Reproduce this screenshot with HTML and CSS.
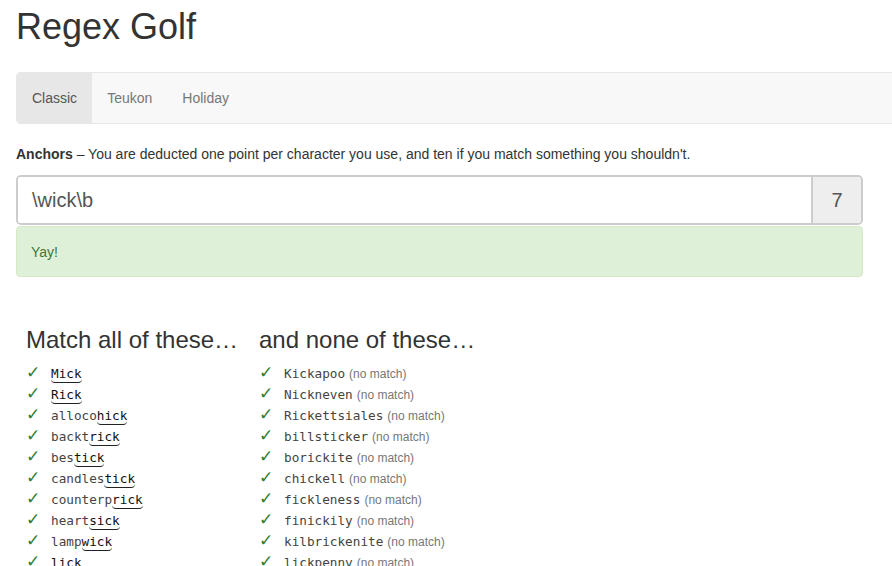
FILE: index.html
```html
<!DOCTYPE html>
<html>
<head>
<meta charset="utf-8">
<title>Regex Golf</title>
<link rel="stylesheet" href="styles.css">
</head>
<body>
<div class="page">
  <h1 class="title">Regex Golf</h1>
  <nav class="navbar">
    <a class="nav-item active">Classic</a>
    <a class="nav-item">Teukon</a>
    <a class="nav-item">Holiday</a>
  </nav>
  <div class="main">
    <p class="desc"><b>Anchors</b> – You are deducted one point per character you use, and ten if you match something you shouldn't.</p>
    <div class="input-group">
      <div class="regex-input">\wick\b</div>
      <div class="addon">7</div>
    </div>
    <div class="alert">Yay!</div>
    <div class="columns">
      <div class="col col-match">
        <h3 class="col-title">Match all of these…</h3>
        <ul class="words">
          <li><span class="check">✓</span><code><span class="hit">Mick</span></code></li>
          <li><span class="check">✓</span><code><span class="hit">Rick</span></code></li>
          <li><span class="check">✓</span><code>alloco<span class="hit">hick</span></code></li>
          <li><span class="check">✓</span><code>backt<span class="hit">rick</span></code></li>
          <li><span class="check">✓</span><code>bes<span class="hit">tick</span></code></li>
          <li><span class="check">✓</span><code>candles<span class="hit">tick</span></code></li>
          <li><span class="check">✓</span><code>counterp<span class="hit">rick</span></code></li>
          <li><span class="check">✓</span><code>heart<span class="hit">sick</span></code></li>
          <li><span class="check">✓</span><code>lamp<span class="hit">wick</span></code></li>
          <li><span class="check">✓</span><code><span class="hit">lick</span></code></li>
        </ul>
      </div>
      <div class="col col-none">
        <h3 class="col-title">and none of these…</h3>
        <ul class="words">
          <li><span class="check">✓</span><code>Kickapoo</code> <small>(no match)</small></li>
          <li><span class="check">✓</span><code>Nickneven</code> <small>(no match)</small></li>
          <li><span class="check">✓</span><code>Rickettsiales</code> <small>(no match)</small></li>
          <li><span class="check">✓</span><code>billsticker</code> <small>(no match)</small></li>
          <li><span class="check">✓</span><code>borickite</code> <small>(no match)</small></li>
          <li><span class="check">✓</span><code>chickell</code> <small>(no match)</small></li>
          <li><span class="check">✓</span><code>fickleness</code> <small>(no match)</small></li>
          <li><span class="check">✓</span><code>finickily</code> <small>(no match)</small></li>
          <li><span class="check">✓</span><code>kilbrickenite</code> <small>(no match)</small></li>
          <li><span class="check">✓</span><code>lickpenny</code> <small>(no match)</small></li>
        </ul>
      </div>
    </div>
  </div>
</div>
</body>
</html>
```

FILE: styles.css
```css
html {
  overflow: hidden;
}
body {
  margin: 0;
  font-family: "Liberation Sans", Arial, sans-serif;
  font-size: 14px;
  line-height: 20px;
  color: #333;
  background: #fff;
}
.page {
  padding: 7px 0 0 16px;
}
.title {
  margin: 0 0 25px;
  font-size: 36px;
  line-height: 40px;
  font-weight: 500;
  color: #333;
}
.navbar {
  display: flex;
  width: 1000px;
  height: 50px;
  background: #f8f8f8;
  border: 1px solid #e7e7e7;
  border-radius: 4px;
}
.nav-item {
  display: block;
  padding: 15px 15px;
  line-height: 20px;
  color: #777;
}
.nav-item.active {
  background: #e7e7e7;
  color: #555;
  border-radius: 4px 0 0 4px;
}
.main {
  width: 847px;
}
.desc {
  margin: 20px 0 11px;
}
.desc b {
  font-weight: bold;
}
.input-group {
  display: flex;
  height: 50px;
  box-sizing: border-box;
  border: 2px solid #ccc;
  border-radius: 5px;
  overflow: hidden;
}
.regex-input {
  flex: 1;
  padding: 0 14px;
  font-size: 20px;
  line-height: 47px;
  color: #555;
  background: #fff;
}
.addon {
  width: 48px;
  border-left: 2px solid #ccc;
  background: #eee;
  text-align: center;
  font-size: 20px;
  line-height: 46px;
  color: #555;
}
.alert {
  margin-top: 1px;
  height: 51px;
  box-sizing: border-box;
  padding: 15px 14px;
  background: #dff0d8;
  border: 1px solid #d6e9c6;
  border-radius: 4px;
  color: #3c763d;
  line-height: 20px;
}
.columns {
  display: flex;
  padding-left: 10px;
  margin-top: 50px;
}
.col {
  width: 233px;
}
.col-title {
  margin: 0 0 10px;
  font-size: 24px;
  line-height: 26px;
  font-weight: 500;
  color: #333;
}
.words {
  list-style: none;
  margin: 0;
  padding: 0;
}
.words li {
  display: flex;
  align-items: baseline;
  height: 21px;
  line-height: 21px;
  white-space: nowrap;
}
.check {
  width: 25px;
  flex: none;
  color: #2f7d32;
  font-family: "DejaVu Sans", sans-serif;
  font-size: 17px;
  line-height: 14px;
  font-weight: bold;
}
code {
  font-family: "DejaVu Sans Mono", monospace;
  font-size: 12.7px;
  color: #444;
}
.hit {
  color: #111;
  border-bottom: 1px solid #222;
  border-radius: 0 0 4px 4px;
  padding-bottom: 1px;
}
small {
  font-size: 12px;
  color: #777;
  margin-left: 4px;
}
```
